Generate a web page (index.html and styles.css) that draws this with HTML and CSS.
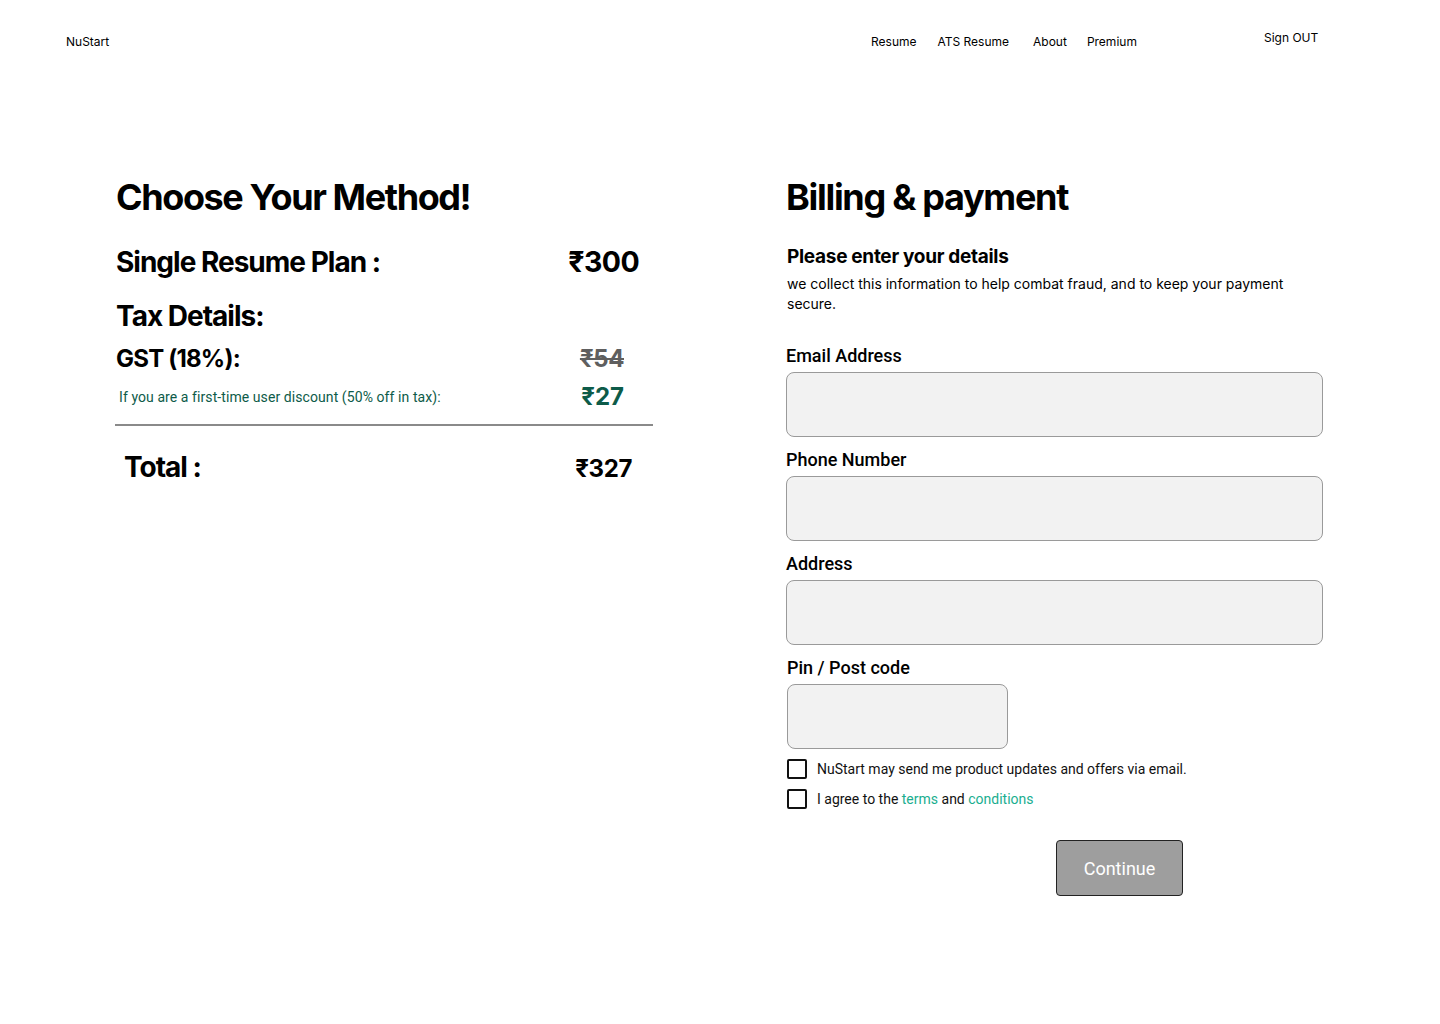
FILE: index.html
```html
<!DOCTYPE html>
<html lang="en">
<head>
<meta charset="utf-8">
<title>NuStart - Billing</title>
<link rel="stylesheet" href="styles.css">
</head>
<body>
<header class="topbar">
  <div class="brand">NuStart</div>
  <nav class="nav">
    <a class="nav-link">Resume</a>
    <a class="nav-link ats">ATS Resume</a>
    <a class="nav-link about">About</a>
    <a class="nav-link">Premium</a>
  </nav>
  <a class="signout">Sign OUT</a>
</header>
<main class="page">
  <section class="summary">
    <h1 class="title">Choose Your Method!</h1>
    <div class="row plan">
      <span>Single Resume Plan :</span>
      <span class="amount">₹300</span>
    </div>
    <h2 class="tax-title">Tax Details:</h2>
    <div class="row gst">
      <span>GST (18%):</span>
      <span class="strike">₹54</span>
    </div>
    <div class="row discount">
      <span class="discount-text">If you are a first-time user discount (50% off in tax):</span>
      <span class="discount-amount">₹27</span>
    </div>
    <hr class="divider">
    <div class="row total">
      <span>Total :</span>
      <span class="total-amount">₹327</span>
    </div>
  </section>
  <section class="billing">
    <h1 class="title">Billing &amp; payment</h1>
    <h3 class="subtitle">Please enter your details</h3>
    <p class="note">we collect this information to help combat fraud, and to keep your payment secure.</p>
    <form class="form">
      <label class="field">
        <span class="label">Email Address</span>
        <span class="input"></span>
      </label>
      <label class="field">
        <span class="label">Phone Number</span>
        <span class="input"></span>
      </label>
      <label class="field">
        <span class="label">Address</span>
        <span class="input"></span>
      </label>
      <label class="field pin">
        <span class="label">Pin / Post code</span>
        <span class="input small"></span>
      </label>
      <div class="checks">
        <div class="check"><span class="box"></span><span>NuStart may send me product updates and offers via email.</span></div>
        <div class="check"><span class="box"></span><span>I agree to the <a class="link">terms</a> and <a class="link">conditions</a></span></div>
      </div>
      <div class="actions">
        <button type="button" class="continue">Continue</button>
      </div>
    </form>
  </section>
</main>
</body>
</html>
```
FILE: styles.css
```css
* { box-sizing: border-box; }
html, body { margin: 0; padding: 0; background: #fff; }
body {
  width: 1440px;
  min-height: 1024px;
  font-family: Inter, "Noto Sans", sans-serif;
  color: #000;
}
.topbar {
  display: flex;
  align-items: flex-start;
  padding: 34px 0 0 66px;
  height: 60px;
  font-size: 12px;
  line-height: 15px;
}
.brand { width: 805px; }
.nav { display: flex; gap: 21px; width: 393px; }
.nav-link { color: #000; text-decoration: none; }
.nav-link.ats { margin-right: 3px; }
.nav-link.about { margin-right: -1px; }
.signout { margin-top: -4px; color: #000; }

.page {
  display: flex;
  padding: 115px 0 0 116px;
}
.summary { width: 537px; margin-right: 133px; }
.billing { width: 537px; }

.title {
  margin: 0;
  font-size: 36px;
  line-height: 44px;
  font-weight: 700;
  letter-spacing: -1.4px;
}
.row {
  display: flex;
  justify-content: space-between;
  align-items: baseline;
}
.plan {
  margin-top: 26px;
  font-size: 28px;
  line-height: 34px;
  font-weight: 700;
  letter-spacing: -1px;
  padding-right: 14px;
}
.plan .amount { font-size: 28.5px; letter-spacing: -0.6px; }
.tax-title {
  margin: 20px 0 0;
  font-size: 28px;
  line-height: 34px;
  font-weight: 700;
  letter-spacing: -1px;
}
.gst {
  margin-top: 11px;
  font-size: 24px;
  line-height: 30px;
  font-weight: 700;
  letter-spacing: -0.8px;
  padding-right: 29px;
}
.strike {
  color: #5f5f5f;
  font-weight: 700;
  letter-spacing: -0.4px;
  text-decoration: line-through;
  text-decoration-thickness: 2px;
}
.discount {
  align-items: center;
  margin-top: 8px;
  padding-left: 3px;
  padding-right: 29px;
}
.discount-text {
  font-family: Roboto, sans-serif;
  font-size: 14px;
  letter-spacing: 0.08px;
  color: #0d5b49;
}
.discount-amount {
  font-size: 24px;
  line-height: 29px;
  font-weight: 700;
  color: #0d5b49;
}
.divider {
  margin: 13px 0 0 -1px;
  border: 0;
  height: 2px;
  background: #8a8a8a;
}
.total {
  margin-top: 24px;
  padding-left: 8px;
  padding-right: 21px;
  font-size: 28px;
  line-height: 34px;
  font-weight: 700;
  letter-spacing: -1px;
}
.total-amount { font-size: 24px; letter-spacing: -0.4px; }

.billing .title { margin-left: 0; letter-spacing: -1.3px; }
.subtitle {
  margin: 26px 0 0 1px;
  font-size: 19px;
  line-height: 24px;
  font-weight: 700;
  letter-spacing: -0.3px;
}
.note {
  margin: 5px 0 0 1px;
  font-size: 14px;
  line-height: 20px;
  width: 520px;
}
.form { margin-top: 31px; display: flex; flex-direction: column; }
.field { display: flex; flex-direction: column; margin-bottom: 12px; }
.label {
  font-family: Roboto, sans-serif;
  font-weight: 500;
  font-size: 18px;
  line-height: 22px;
  margin-bottom: 5px;
}
.input {
  display: block;
  width: 537px;
  height: 65px;
  background: #f2f2f2;
  border: 1px solid #9a9a9a;
  border-radius: 8px;
}
.pin .label { margin-left: 1px; }
.input.small { width: 221px; margin-left: 1px; }
.checks { display: flex; flex-direction: column; gap: 10px; margin-top: -2px; }
.check {
  display: flex;
  align-items: center;
  gap: 10px;
  font-family: Roboto, sans-serif;
  font-size: 14px;
  line-height: 20px;
  color: #111;
  padding-left: 1px;
}
.box {
  width: 20px;
  height: 20px;
  border: 2px solid #111;
  border-radius: 2px;
}
.link { color: #1aae8f; }
.actions { display: flex; justify-content: flex-start; padding-left: 270px; margin-top: 31px; }
.continue {
  width: 127px;
  height: 56px;
  background: #9e9e9e;
  border: 1px solid #222;
  border-radius: 4px;
  color: #fff;
  font-family: Roboto, sans-serif;
  font-size: 18px;
}
```
